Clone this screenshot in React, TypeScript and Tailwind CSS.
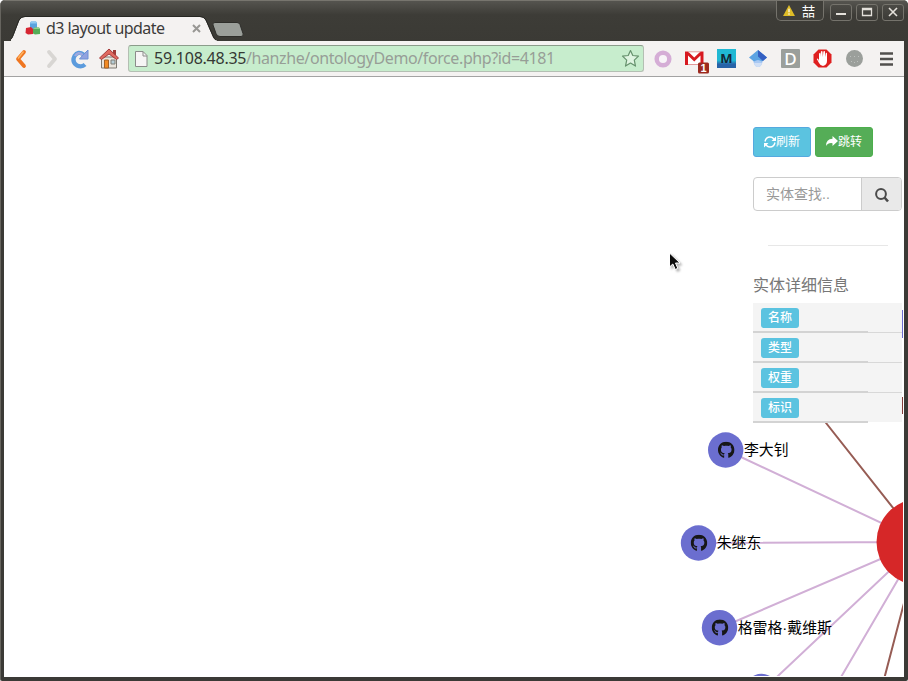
import React from "react";
import { FaGithub } from "react-icons/fa";

const cjk = "font-['Liberation_Sans','Noto_Sans_CJK_SC',sans-serif]";

function WindowButton({ children }: { children: React.ReactNode }) {
  return (
    <div className="flex h-[17px] w-[22px] items-center justify-center rounded-[3px] border border-[#75736c] bg-gradient-to-b from-[#4b4a45] to-[#3c3b37]">
      <svg width="12" height="11" viewBox="0 0 12 11" fill="none" stroke="#e4e1db" strokeWidth="1.6">
        {children}
      </svg>
    </div>
  );
}

function TitleBar() {
  return (
    <header className="relative flex h-[41px] shrink-0 items-end border-t border-[#77756e] bg-gradient-to-b from-[#55544f] from-0% via-[#3d3c37] via-35% to-[#3b3a35]">
      <div className="relative ml-[10px] h-[25px] w-[204px]">
        <svg className="absolute inset-0" width="206" height="25" viewBox="0 0 206 25">
          <path d="M-7 25C1 25 1 23 3 18L8 5Q10 1 14 1H189Q193 1 195 5L202 21Q204 25 208 25Z" fill="#f4f2f1" />
          <path d="M-4 24C1 24 1 22 3 17L8 4Q10 .5 14 .5H189Q193 .5 195 4L202 20Q203 23 205 24" fill="none" stroke="#262622" />
        </svg>
        <div className="relative flex h-[25px] items-center">
          <svg className="ml-[14px]" width="16" height="15" viewBox="0 0 16 15">
            <path d="M5 2l1-1.500h5L12 2v6H5Z" fill="#5ba3df" />
            <path d="M6 .5h5L12 2.500H5Z" fill="#91caf1" />
            <path d="M1 7l5-1 2 2v5l-5 .5L.5 12Z" fill="#d62632" />
            <path d="M8 8l2-1.500h4L15 8v5l-5 .5-2-1Z" fill="#55ad57" />
            <path d="M8 8l2-1.500h4L15 8Z" fill="#91ce8b" />
          </svg>
          <span className="ml-[5px] w-[119px] whitespace-nowrap pb-px font-['Noto_Sans',sans-serif] text-[16px] leading-[22px] tracking-[-0.550px] text-[#3c3b3a]">d3 layout update</span>
          <svg className="ml-[27px]" width="9" height="9" viewBox="0 0 9 9" stroke="#989794" strokeWidth="2">
            <path d="M1 1l7 7M8 1L1 8" />
          </svg>
        </div>
      </div>
      <svg className="mb-[3px] ml-[-3px]" width="33" height="17" viewBox="0 0 33 17">
        <path d="M3 1.500h22q2 0 3 2l3 9q1 3-2 3H8q-3 0-4-3L1 4q-1-2.500 2-2.500Z" fill="#9b9f9a" stroke="#2e2e2a" />
      </svg>
      <div className="ml-auto flex self-start pr-[4px]">
        <div className="mr-[6px] flex h-[20px] w-[48px] items-center justify-between rounded-b-[5px] border border-t-0 border-[#75736c] bg-[#403f3a] pl-[6px] pr-[8px]">
          <svg width="12" height="11" viewBox="0 0 13 12">
            <path d="M6.500 0L13 12H0Z" fill="#dfbd27" />
            <path d="M6.500 4v4M6.500 9v1.500" stroke="#fff" strokeWidth="1.300" />
          </svg>
          <span className={`${cjk} pt-[2px] text-[13px] leading-[18px] text-white`}>喆</span>
        </div>
        <div className="mt-[3px] flex gap-[4px]">
          <WindowButton><path d="M1 7h10" strokeWidth="2" /></WindowButton>
          <WindowButton><path d="M1.500 1.500h9v7h-9ZM1.500 2.500h9" strokeWidth="1.300" /></WindowButton>
          <WindowButton><path d="M2 1l8 8M10 1l-8 8" /></WindowButton>
        </div>
      </div>
    </header>
  );
}

function Extensions() {
  return (
    <div className="ml-[10px] flex items-center">
      <svg width="18" height="18" viewBox="0 0 18 18"><circle cx="9" cy="9" r="6.300" fill="#f8f4f8" stroke="#d5add6" strokeWidth="4.500" /></svg>
      <svg className="ml-[13px] overflow-visible" width="24" height="24" viewBox="0 0 24 24">
        <path d="M0 4.500h18.500v13.500H0Z" fill="#fff" />
        <path d="M0 4.500h3l6.250 6 6.250-6h3V18h-3V8.500l-6.250 6-6.250-6V18H0Z" fill="#d71920" />
        <path d="M3 4.800h12.500M3 17.500h12.500" stroke="#e29a9a" />
        <rect x="13" y="15.500" width="11" height="11" rx="1.500" fill="#9b291e" />
        <text x="15.500" y="25" fill="#fff" className="font-['Liberation_Sans',sans-serif] text-[11px] font-bold">1</text>
      </svg>
      <div className="ml-[8px] flex h-[19px] w-[19px] items-center justify-center bg-gradient-to-b from-[#20b8d3] from-60% to-[#2763a8] to-80% pb-px font-['Noto_Sans',sans-serif] text-[13px] font-bold leading-none text-[#132636]">M</div>
      <svg className="ml-[13px]" width="18" height="18" viewBox="0 0 18 18">
        <path d="M4.500 9h9v3q-1 5-4.500 5-3.500 0-4.500-5Z" fill="#a9c9f3" />
        <path d="M5 13h8q-1 4-4 4t-4-4Z" fill="#d0dff6" />
        <path d="M9 0L0 7.500l5 4q4-3 8 0l5-4Z" fill="#5ba3e2" />
        <path d="M9 0v6.500l5 4.500 4-3.500Z" fill="#345fc2" />
      </svg>
      <div className="ml-[14px] flex h-[19px] w-[19px] items-center justify-center rounded-[1px] bg-[#9b9f9b] font-['Noto_Sans',sans-serif] text-[17px] font-medium leading-none text-white">D</div>
      <svg className="ml-[13px]" width="19" height="19" viewBox="0 0 19 19">
        <path d="M5.500.5h8l5 5v8l-5 5h-8l-5-5v-8Z" fill="#df2020" />
        <path d="M6 12V4.500q1-1 1.500 0V8l.4-5.500q1-1 1.600 0L9.800 8l.6-5.500q1-1 1.600 0V8l.8-4q1-.700 1.200.500V12q0 4-4 5-2.500 0-4-3L3.800 10q.5-1.200 1.500 0Z" fill="#fff" />
      </svg>
      <svg className="ml-[14px]" width="17" height="17" viewBox="0 0 17 17">
        <circle cx="8.500" cy="8.500" r="8.500" fill="#9b9f9b" />
        <path d="M4 6.500h1M8 6.500h1M12 6.500h1M5 11.500h1M8 12.500h1M11 11.500h1" stroke="#bdc0bd" />
      </svg>
      <svg className="ml-[17px]" width="13" height="14" viewBox="0 0 13 14"><path d="M0 1.500h13M0 7h13M0 12.500h13" stroke="#51504e" strokeWidth="2.600" /></svg>
    </div>
  );
}

function Toolbar() {
  return (
    <nav className="flex h-[36px] shrink-0 items-center border-b border-[#a3a3a3] bg-[#f4f2f1]">
      <svg className="ml-[11px]" width="12" height="20" viewBox="0 0 12 20"><path d="M9 3L3 10l6 7" fill="none" stroke="#ef7621" strokeWidth="3.800" strokeLinecap="round" strokeLinejoin="round" /><path d="M8.500 2.500L3 9.500" stroke="#ffb25f" strokeWidth="1.500" /></svg>
      <svg className="ml-[19px]" width="12" height="20" viewBox="0 0 12 20"><path d="M3 3l6 7-6 7" fill="none" stroke="#d8d6d3" strokeWidth="3.800" strokeLinecap="round" strokeLinejoin="round" /></svg>
      <svg className="ml-[12px]" width="20" height="20" viewBox="0 0 20 20">
        <path d="M13.500 5.500Q8 1.500 4.500 7q-3 6 2.500 9.500 5 2 8-1" fill="none" stroke="#5b9bdd" strokeWidth="4.200" />
        <path d="M13 6Q8 2 5 7" fill="none" stroke="#9da9df" strokeWidth="2.400" />
        <path d="M18 1v9H9.500l3-3.500Z" fill="#91a2df" stroke="#6c91d6" />
      </svg>
      <svg className="ml-[9px]" width="20" height="21" viewBox="0 0 20 21">
        <path d="M2.500 9h15v11h-15Z" fill="#e9e4dc" stroke="#7c7972" />
        <path d="M14 2h3v5h-3Z" fill="#a03a37" />
        <path d="M.5 10L10 1l9.500 9-2 1.500L10 6l-7.500 5.500Z" fill="#df6960" stroke="#a43b3b" />
        <path d="M5.500 12h4v8h-4Z" fill="#f28b24" stroke="#a36127" />
        <path d="M12 12h4v4h-4Z" fill="#b5cdd7" stroke="#817f76" />
      </svg>
      <div className="ml-[9px] flex h-[27px] w-[516px] items-center rounded-[3px] border border-[#b4bfb3] border-t-[#8b9c8b] bg-[#c7edcd]">
        <svg className="ml-[6px]" width="13" height="16" viewBox="0 0 13 16"><path d="M1 .5h7l4 4V15.500H.5V.5Z" fill="#f6f5f5" stroke="#8b8c8a" /><path d="M8 .5v4.500h4" fill="none" stroke="#8b8c8a" /></svg>
        <span className="ml-[6px] flex whitespace-nowrap pb-px font-['Noto_Sans',sans-serif] text-[16px] leading-[24px] text-[#979e97]">
          <span className="w-[92px] tracking-[-0.250px] text-[#353834]">59.108.48.35</span>
          <span className="w-[309px] tracking-[-0.400px]">/hanzhe/ontologyDemo/force.php?id=4181</span>
        </span>
        <svg className="ml-auto mr-[3px]" width="19" height="19" viewBox="0 0 19 19"><path d="M9.500 1.500l2.300 5 5.700.600-4.200 4 1.200 6-5-3-5 3 1.200-6-4.200-4 5.700-.600Z" fill="#dff4e1" stroke="#65916c" strokeWidth="1.200" strokeLinejoin="round" /></svg>
      </div>
      <Extensions />
    </nav>
  );
}

function GraphNode({ x, y, label }: { x: number; y: number; label: string }) {
  return (
    <g>
      <circle cx={x} cy={y} r="17.700" fill="#6b6ecf" />
      <FaGithub x={x - 8} y={y - 8.5} size={17} color="#171717" />
      <text x={x + 18.2} y={y + 5} fill="#000" className={`${cjk} text-[14.900px]`}>{label}</text>
    </g>
  );
}

function ForceGraph() {
  return (
    <svg className="absolute inset-0" width="899" height="599" viewBox="4 77 899 599">
      <g stroke="#d1afd6" strokeWidth="2">
        <path d="M726 450L920 541M698 543L920 542M720 628L920 542M762 691L920 542M820 713L920 542" />
      </g>
      <path d="M800 390L920 542M866 748L920 542" stroke="#965c54" strokeWidth="2" />
      <circle cx="920" cy="542" r="43.500" fill="#d62728" />
      <GraphNode x={725.7} y={450} label="李大钊" />
      <GraphNode x={698.5} y={543} label="朱继东" />
      <GraphNode x={719.5} y={627.7} label="格雷格·戴维斯" />
      <circle cx="761.500" cy="691.500" r="17.700" fill="#6b6ecf" />
      <path d="M902.500 310v28" stroke="#6b6ecf" />
      <path d="M902.500 397v17" stroke="#843c39" />
    </svg>
  );
}

const fields = ["名称", "类型", "权重", "标识"];

function Sidebar() {
  return (
    <aside className={`relative ml-auto mr-[2px] flex w-[149px] flex-col pt-[50px] ${cjk}`}>
      <div className="flex gap-1">
        <button className="flex h-[30px] w-[58px] items-center justify-center rounded-[3px] border border-[#55a9df] bg-[#5bc3e0] text-[12px] text-white">
          <svg width="12" height="12" viewBox="0 0 12 12" fill="none" stroke="#fff" strokeWidth="1.400"><path d="M1 5.500Q2 1 6 1q3 0 4 2.500M11 6.500Q10 11 6 11 3 11 2 8.500" /><path d="M12 .5v4.500H7.500ZM0 11.500V7h4.500Z" fill="#fff" stroke="none" /></svg>
          刷新
        </button>
        <button className="flex h-[30px] w-[58px] items-center justify-center rounded-[3px] border border-[#4cae4c] bg-[#55ad57] text-[12px] text-white">
          <svg width="12" height="12" viewBox="0 0 12 12"><path d="M6.500 0L12 5 6.500 10V7.200Q2 6.500 0 10q0-7 6.500-7.200Z" fill="#fff" /></svg>
          跳转
        </button>
      </div>
      <div className="mt-[20px] flex h-[34px] rounded-[4px] border border-[#ccc] bg-white">
        <div className="flex w-[107px] items-center pl-[12px] text-[14px] text-[#999]">实体查找..</div>
        <div className="flex flex-1 items-center justify-center rounded-r-[3px] border-l border-[#ccc] bg-[#e9e9e9]">
          <svg className="mt-[2px]" width="14" height="15" viewBox="0 0 14 15" fill="none" stroke="#4b4b4b"><circle cx="6" cy="6" r="4.900" strokeWidth="2" /><path d="M9.500 9.500L13 13.500" strokeWidth="2.600" /></svg>
        </div>
      </div>
      <div className="ml-[15px] mr-[14px] mt-[34px] h-px bg-[#e7e7e7]" />
      <h2 className="mt-[28px] h-[29px] text-[16px] leading-[23px] text-[#777]">实体详细信息</h2>
      {fields.map((field, index) => (
        <div key={field} className="flex h-[30px] flex-col bg-[#f4f4f4]">
          <div className="ml-[8px] mt-[5px] flex h-[20px] w-[38px] items-center justify-center rounded-[3px] bg-[#5bc3e0] pb-px text-[12px] font-medium text-white">{field}</div>
          <div className="mt-[3px] flex h-[2px]">
            <div className="w-[115px] bg-[#d3d3d3]" />
            <div className={index < 3 ? "mb-0 mt-px flex-1 bg-[#d8d8d8]" : "mt-px flex-1 bg-white"} />
          </div>
        </div>
      ))}
    </aside>
  );
}

export default function App() {
  return (
    <div className="flex h-[681px] w-[908px] flex-col overflow-hidden rounded-t-[5px] rounded-b-[2px] border-l border-[#66645e] bg-[#3b3a36]">
      <TitleBar />
      <main className="relative ml-[3px] flex h-[636px] w-[900px] flex-col overflow-hidden bg-white">
        <Toolbar />
        <section className="relative flex flex-1 overflow-hidden">
          <ForceGraph />
          <Sidebar />
          <svg className="absolute left-[664px] top-[175px] drop-shadow-[2px_2px_1px_rgba(0,0,0,0.3)]" width="14" height="20" viewBox="0 0 14 20"><path d="M1.500 1v14l3.300-3 2.500 5.500 2.500-1.200L7.500 11H12Z" fill="#0b0b0b" stroke="#fff" /></svg>
        </section>
      </main>
    </div>
  );
}
